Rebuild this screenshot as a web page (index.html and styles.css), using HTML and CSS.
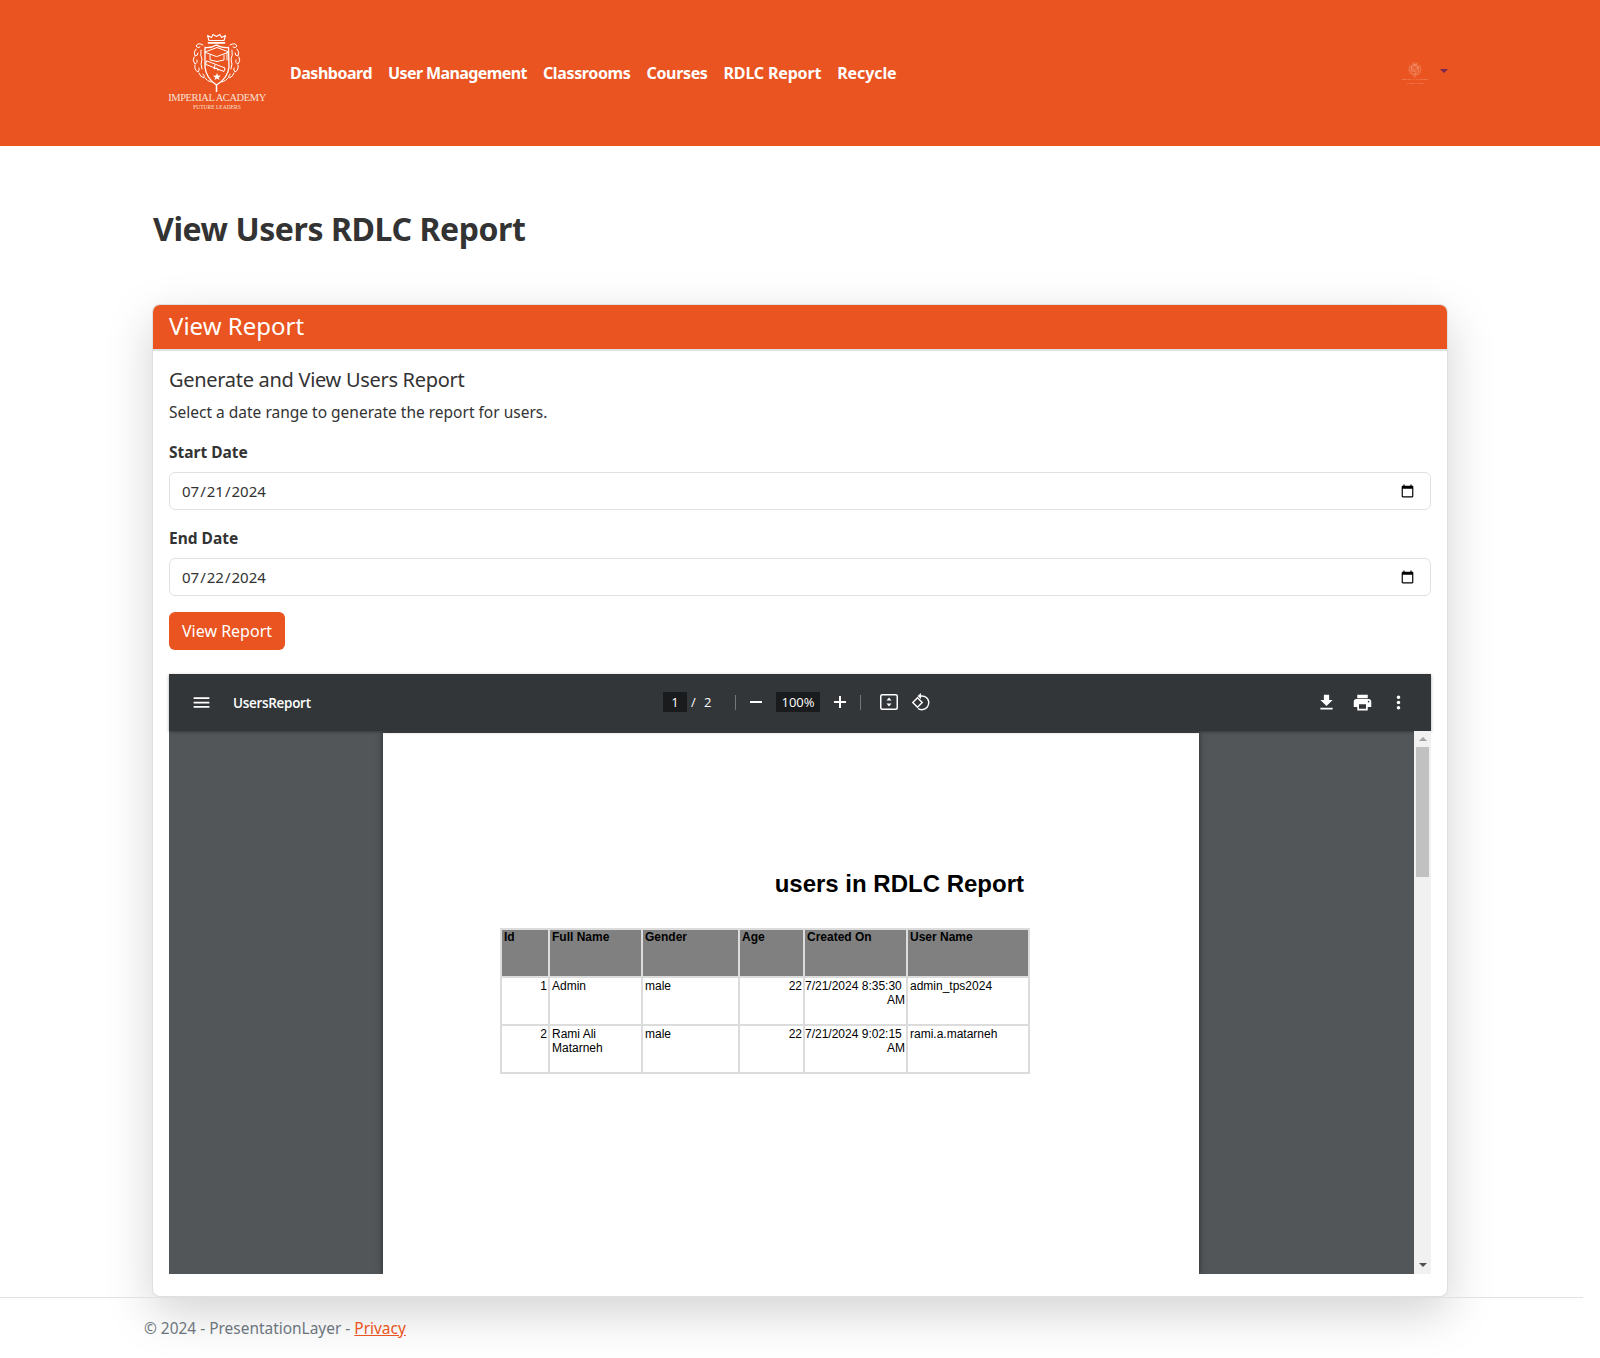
FILE: index.html
```html
<!DOCTYPE html>
<html lang="en">
<head>
    <meta charset="UTF-8">
    <meta name="viewport" content="width=device-width, initial-scale=1.0">
    <title>View Users RDLC Report</title>
    <link rel="stylesheet" href="styles.css">
</head>
<body>
    <svg class="defs" width="0" height="0">
        <symbol id="crest" viewBox="0 0 50 60">
            <g fill="none" stroke="currentColor" stroke-width="1" stroke-linecap="round" stroke-linejoin="round">
                <!-- crown -->
                <path d="M17 8.500 L15.500 3.500 L19.500 5.500 L21 2.500 L24.500 4.500 L28 2.500 L29.500 5.500 L33.500 3.500 L32 8.500 Z" stroke-width="1.100"/>
                <path d="M16.500 10.800 H32.500" stroke-width="1.800"/>
                <!-- shield -->
                <path d="M13 15.500 Q20 16 24.500 13 Q29 16 36.500 15.500 L37 35 Q36 46 24.500 53 Q14 46 13 35 Z" stroke-width="1.300"/>
                <!-- side scrolls -->
                <path d="M11 13 Q6 10 4 14 Q6 17 8 15 M4 17 Q1 20 3 24 Q6 24 6 21 M2 25 Q0 29 3 32 Q6 31 5 28 M3 33 Q2 38 6 40 Q8 38 7 36 M7 41 Q8 45 12 46 Q13 44 11 42 M13 46 Q15 49 19 50"/>
                <path d="M38 13 Q43 10 45 14 Q43 17 41 15 M45 17 Q48 20 46 24 Q43 24 43 21 M47 25 Q49 29 46 32 Q43 31 44 28 M46 33 Q47 38 43 40 Q41 38 42 36 M42 41 Q41 45 37 46 Q36 44 38 42 M36 46 Q34 49 30 50"/>
                <path d="M9 18 Q8 24 10 27 Q8 32 10 37"/>
                <path d="M40 18 Q41 24 39 27 Q41 32 39 37"/>
                <!-- cap -->
                <path d="M13 20 L25 15.500 L37 20 L25 24.500 Z"/>
                <path d="M18 23 V28 Q25 31 32 28 V23"/>
                <path d="M35 21 V28"/>
                <!-- diploma -->
                <path d="M15 29 L33 36 L32 39.500 L14 32.500 Z"/>
                <path d="M23 33 L22 37 L25 36 L26 38.500"/>
            </g>
            <path d="M25 41 L26 43.500 L29 43.700 L26.700 45.500 L27.500 48 L25 46.600 L22.500 48 L23.300 45.500 L21 43.700 L24 43.500 Z" fill="currentColor"/>
            <path d="M24.500 53 V60" stroke="currentColor" stroke-width="1.500"/>
        </symbol>
    </svg>

    <header class="topbar">
        <a class="brand" href="#">
            <svg class="brand-crest"><use href="#crest"/></svg>
            <span class="brand-name">IMPERIAL ACADEMY</span>
            <span class="brand-tag">FUTURE LEADERS</span>
        </a>
        <nav class="nav">
            <a href="#">Dashboard</a>
            <a href="#">User Management</a>
            <a href="#">Classrooms</a>
            <a href="#">Courses</a>
            <a href="#">RDLC Report</a>
            <a href="#">Recycle</a>
        </nav>
        <a class="account" href="#">
            <span class="avatar">
                <svg class="avatar-crest"><use href="#crest"/></svg>
                <span class="avatar-name">IMPERIAL ACADEMY</span>
                <span class="avatar-tag">FUTURE LEADERS</span>
            </span>
            <span class="caret"></span>
        </a>
    </header>

    <main class="main">
        <h1 class="page-title">View Users RDLC Report</h1>

        <section class="card">
            <div class="card-header">View Report</div>
            <div class="card-body">
                <h5 class="card-title">Generate and View Users Report</h5>
                <p class="card-text">Select a date range to generate the report for users.</p>

                <label class="form-label" for="startDate">Start Date</label>
                <input class="form-control" type="date" id="startDate" value="2024-07-21">

                <label class="form-label" for="endDate">End Date</label>
                <input class="form-control" type="date" id="endDate" value="2024-07-22">

                <button class="btn" type="button">View Report</button>

                <div class="viewer">
                    <div class="toolbar">
                        <svg class="tool-menu" viewBox="0 0 24 24"><path d="M3 18h18v-2H3v2zm0-5h18v-2H3v2zm0-7v2h18V6H3z"/></svg>
                        <span class="doc-name">UsersReport</span>

                        <span class="page-box">1</span>
                        <span class="page-sep">/</span>
                        <span class="page-total">2</span>
                        <span class="tool-divider first"></span>
                        <svg class="tool-minus" viewBox="0 0 12 12"><path d="M0 5h12v2H0z"/></svg>
                        <span class="zoom-box">100%</span>
                        <svg class="tool-plus" viewBox="0 0 12 12"><path d="M5 0h2v5h5v2H7v5H5V7H0V5h5z"/></svg>
                        <span class="tool-divider second"></span>
                        <svg class="tool-fit" viewBox="0 0 18 16">
                            <rect x="0.750" y="0.750" width="16.500" height="14.500" rx="1.500" fill="none" stroke="#fff" stroke-width="1.500"/>
                            <path d="M9 3.500 L11.500 6.500 H6.500 Z M9 12.500 L11.500 9.500 H6.500 Z"/>
                        </svg>
                        <svg class="tool-rotate" viewBox="0 0 18 18">
                            <path d="M0.800 9.500 L5.500 4.800 L10.200 9.500 L5.500 14.200 Z" fill="none" stroke="#fff" stroke-width="1.400"/>
                            <path d="M7.500 3.200 Q15.500 2.200 16.800 9 Q16.800 15.500 10 16.800 Q7.500 16.800 6 15.500" fill="none" stroke="#fff" stroke-width="1.400"/>
                            <path d="M9 0 V6 L5.500 3 Z"/>
                        </svg>

                        <svg class="tool-download" viewBox="0 0 24 24"><path d="M5 20h14v-2H5v2zM19 9h-4V3H9v6H5l7 7 7-7z"/></svg>
                        <svg class="tool-print" viewBox="0 0 24 24"><path d="M19 8H5c-1.660 0-3 1.340-3 3v6h4v4h12v-4h4v-6c0-1.660-1.340-3-3-3zm-3 11H8v-5h8v5zm3-7c-.55 0-1-.45-1-1s.45-1 1-1 1 .45 1 1-.45 1-1 1zm-1-9H6v4h12V3z"/></svg>
                        <svg class="tool-more" viewBox="0 0 24 24"><path d="M12 8c1.100 0 2-.9 2-2s-.9-2-2-2-2 .9-2 2 .9 2 2 2zm0 2c-1.100 0-2 .9-2 2s.9 2 2 2 2-.9 2-2-.9-2-2-2zm0 6c-1.100 0-2 .9-2 2s.9 2 2 2 2-.9 2-2-.9-2-2-2z"/></svg>
                    </div>

                    <div class="viewer-body">
                        <div class="pages">
                            <div class="pdf-page">
                                <h2 class="report-title">users in RDLC Report</h2>
                                <table class="report">
                                    <thead>
                                        <tr>
                                            <th class="col-id">Id</th>
                                            <th class="col-name">Full Name</th>
                                            <th class="col-gender">Gender</th>
                                            <th class="col-age">Age</th>
                                            <th class="col-created">Created On</th>
                                            <th class="col-user">User Name</th>
                                        </tr>
                                    </thead>
                                    <tbody>
                                        <tr>
                                            <td class="num">1</td>
                                            <td>Admin</td>
                                            <td>male</td>
                                            <td class="num">22</td>
                                            <td class="date">7/21/2024 8:35:30&nbsp;<br>AM</td>
                                            <td>admin_tps2024</td>
                                        </tr>
                                        <tr>
                                            <td class="num">2</td>
                                            <td>Rami Ali<br>Matarneh</td>
                                            <td>male</td>
                                            <td class="num">22</td>
                                            <td class="date">7/21/2024 9:02:15&nbsp;<br>AM</td>
                                            <td>rami.a.matarneh</td>
                                        </tr>
                                    </tbody>
                                </table>
                            </div>
                        </div>
                        <div class="scrollbar">
                            <span class="arrow-up"></span>
                            <span class="thumb"></span>
                            <span class="arrow-down"></span>
                        </div>
                    </div>
                </div>
            </div>
        </section>
    </main>

    <footer class="footer">
        &copy; 2024 - PresentationLayer - <a href="#">Privacy</a>
    </footer>
</body>
</html>
```

FILE: styles.css
```css
html, body {
    margin: 0;
    padding: 0;
}
body {
    font-family: "Noto Sans", "Open Sans", sans-serif;
    font-size: 16px;
    color: #333;
    background: white;
    height: 1358px;
    overflow: hidden;
}
.defs {
    display: block;
    height: 0;
}

/* top bar */
.topbar {
    display: flex;
    align-items: center;
    height: 146px;
    background-color: #e95420;
    padding-left: 167px;
    box-sizing: border-box;
}
.brand {
    display: flex;
    flex-direction: column;
    align-items: center;
    width: 100px;
    color: white;
    text-decoration: none;
    font-family: "Liberation Serif", serif;
    margin-right: 23px;
    padding-bottom: 4px;
}
.brand-crest {
    width: 50px;
    height: 60px;
}
.brand-name {
    font-size: 10.500px;
    line-height: 11px;
    white-space: nowrap;
    letter-spacing: -0.420px;
    color: #fbe0d5;
}
.brand-tag {
    font-size: 5.500px;
    line-height: 8px;
    white-space: nowrap;
    color: #fbe0d5;
}
.nav {
    display: flex;
    gap: 16px;
}
.nav a {
    color: white;
    font-weight: 700;
    font-size: 16px;
    letter-spacing: -0.350px;
    text-decoration: none;
    white-space: nowrap;
}
.nav a:nth-child(1) {
    letter-spacing: -0.480px;
}
.nav a:nth-child(2) {
    letter-spacing: -0.600px;
}
.nav a:nth-child(5) {
    letter-spacing: -0.170px;
}
.nav a:nth-child(6) {
    letter-spacing: -0.100px;
}
.account {
    margin-left: auto;
    margin-right: 152px;
    display: flex;
    align-items: flex-start;
    gap: 12px;
    text-decoration: none;
}
.avatar {
    display: flex;
    flex-direction: column;
    align-items: center;
    width: 26px;
    color: #f8b9a0;
    font-family: "Liberation Serif", serif;
}
.avatar-crest {
    width: 14px;
    height: 16px;
}
.avatar-name {
    font-size: 2.700px;
    line-height: 4px;
    white-space: nowrap;
}
.avatar-tag {
    font-size: 2px;
    line-height: 3px;
    white-space: nowrap;
}
.caret {
    width: 0;
    height: 0;
    margin-top: 7px;
    border-left: 4.800px solid transparent;
    border-right: 4.800px solid transparent;
    border-top: 4.800px solid #772953;
}

/* page */
.main {
    width: 1296px;
    margin: 0 auto;
}
.page-title {
    font-size: 32px;
    font-weight: 700;
    line-height: 38px;
    letter-spacing: -0.420px;
    margin: 64px 0 56px 1px;
    color: #333;
}
.card {
    background: white;
    border: 1px solid rgba(0, 0, 0, 0.125);
    border-radius: 8px;
    box-shadow: 0 16px 48px rgba(0, 0, 0, 0.175);
    height: 993px;
    box-sizing: border-box;
}
.card-header {
    background-color: #e95420;
    color: white;
    font-size: 24px;
    line-height: 42px;
    height: 46px;
    box-sizing: border-box;
    padding-left: 16px;
    border-bottom: 2px solid #dee2e6;
    border-radius: 7px 7px 0 0;
}
.card-body {
    padding: 17px 16px 16px;
}
.card-title {
    font-size: 20px;
    font-weight: 400;
    line-height: 24px;
    letter-spacing: -0.300px;
    margin: 0 0 8px;
}
.card-text {
    font-size: 15.500px;
    line-height: 24px;
    margin: 0 0 16px;
}
.form-label {
    display: block;
    font-weight: 700;
    font-size: 15.500px;
    line-height: 24px;
    margin-bottom: 8px;
}
.form-control {
    display: block;
    width: 100%;
    height: 38px;
    box-sizing: border-box;
    padding: 6px 13px 6px 11px;
    font-family: "Noto Sans", sans-serif;
    font-size: 15px;
    color: #333;
    background: white;
    border: 1px solid #dee2e6;
    border-radius: 6px;
    margin-bottom: 16px;
}
.btn {
    display: block;
    background-color: #e95420;
    color: white;
    border: none;
    border-radius: 6px;
    width: 116px;
    height: 38px;
    font-family: "Noto Sans", sans-serif;
    font-size: 16px;
    cursor: pointer;
    margin-bottom: 24px;
}

/* pdf viewer */
.viewer {
    height: 600px;
    display: flex;
    flex-direction: column;
    background-color: #525659;
}
.toolbar {
    display: flex;
    align-items: center;
    flex: none;
    height: 57px;
    box-sizing: border-box;
    padding-bottom: 1px;
    background-color: #323639;
    color: white;
    fill: white;
    font-family: "Open Sans", "Noto Sans", sans-serif;
    font-size: 13px;
    box-shadow: 0 1px 3px rgba(0, 0, 0, 0.35);
    position: relative;
    z-index: 1;
}
.tool-menu {
    width: 21px;
    height: 21px;
    margin-left: 22px;
}
.doc-name {
    width: 106px;
    margin-left: 21px;
    margin-top: 1px;
    font-size: 13.500px;
    font-weight: 600;
    letter-spacing: -0.300px;
    white-space: nowrap;
}
.page-box {
    margin-left: 324px;
    width: 24px;
    height: 20px;
    line-height: 20px;
    text-align: center;
    background-color: #191b1c;
}
.page-sep {
    margin-left: 4px;
    width: 13px;
}
.page-total {
    width: 31px;
}
.tool-divider {
    width: 1px;
    height: 15px;
    background-color: #74777a;
}
.tool-minus {
    width: 12px;
    height: 12px;
    margin-left: 14px;
}
.zoom-box {
    margin-left: 14px;
    width: 44px;
    height: 20px;
    line-height: 20px;
    text-align: center;
    background-color: #191b1c;
}
.tool-plus {
    width: 12px;
    height: 12px;
    margin-left: 14px;
}
.tool-divider.second {
    margin-left: 14px;
}
.tool-fit {
    width: 18px;
    height: 16px;
    margin-left: 19px;
}
.tool-rotate {
    width: 18px;
    height: 18px;
    margin-left: 14px;
}
.tool-download {
    width: 21px;
    height: 21px;
    margin-left: auto;
}
.tool-print {
    width: 21px;
    height: 21px;
    margin-left: 15px;
}
.tool-more {
    width: 21px;
    height: 21px;
    margin-left: 15px;
    margin-right: 22px;
}
.viewer-body {
    flex: 1;
    display: flex;
    min-height: 0;
}
.pages {
    flex: 1;
    display: flex;
    justify-content: center;
    padding: 2px 1px 0 0;
    overflow: hidden;
}
.pdf-page {
    width: 816px;
    background: white;
    box-shadow: 0 0 6px rgba(0, 0, 0, 0.5);
    box-sizing: border-box;
    padding: 137px 175px 0 117px;
    font-family: "Liberation Sans", Arial, sans-serif;
    color: black;
}
.report-title {
    font-size: 24px;
    font-weight: 700;
    line-height: 28px;
    text-align: right;
    margin: 0 0 30px;
}
.report {
    border-collapse: collapse;
    table-layout: fixed;
    width: 528px;
    margin-right: -4px;
    font-size: 12px;
    line-height: 14px;
}
.report th, .report td {
    border: 2px solid #dcdcdc;
    padding: 0 1px 0 2px;
    height: 48px;
    box-sizing: border-box;
    vertical-align: top;
    text-align: left;
}
.report th {
    background-color: #808080;
    font-weight: 700;
}
.report td {
    padding-top: 1px;
}
.report td.num {
    text-align: right;
}
.report td.date {
    text-align: right;
    padding-left: 0;
    white-space: nowrap;
}
.col-id { width: 48px; }
.col-name { width: 93px; }
.col-gender { width: 97px; }
.col-age { width: 65px; }
.col-created { width: 103px; }
.col-user { width: 122px; }

.scrollbar {
    flex: none;
    width: 17px;
    background-color: #f1f1f1;
    display: flex;
    flex-direction: column;
    align-items: center;
    position: relative;
    z-index: 1;
}
.arrow-up {
    margin-top: 6px;
    border-left: 4px solid transparent;
    border-right: 4px solid transparent;
    border-bottom: 4px solid #a3a3a3;
}
.thumb {
    width: 13px;
    height: 130px;
    margin-top: 6px;
    background-color: #c1c1c1;
}
.arrow-down {
    margin-top: auto;
    margin-bottom: 7px;
    border-left: 4px solid transparent;
    border-right: 4px solid transparent;
    border-top: 4px solid #505050;
}

/* footer */
.footer {
    margin-right: 17px;
    padding: 18px 0 0 144px;
    border-top: 1px solid #dee2e6;
    font-size: 15.450px;
    line-height: 24px;
    color: #6c757d;
}
.footer a {
    color: #e95420;
}
```
